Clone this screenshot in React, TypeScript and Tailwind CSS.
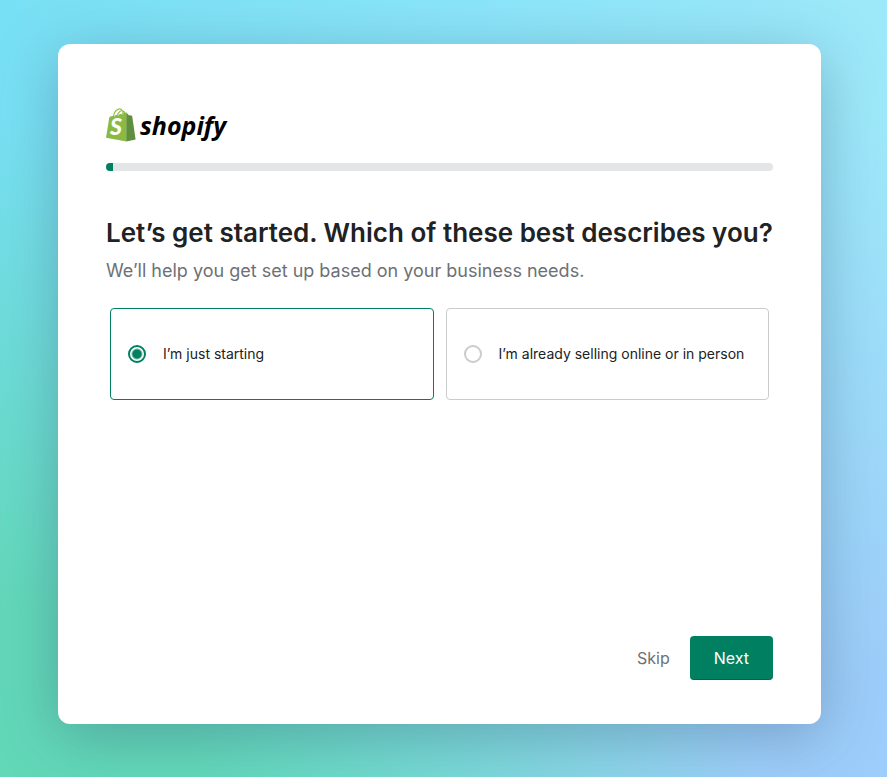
import { useState } from "react";

const OPTIONS = [
  { value: "starting", label: "I’m just starting" },
  { value: "selling", label: "I’m already selling online or in person" },
];

const ShopifyLogo = () => (
  <div className="flex h-[34px] items-center gap-1">
    <svg width="30" height="34" viewBox="0 0 30 34" aria-hidden="true">
      {/* handle */}
      <path
        d="M7.5 8.5C8 4.500 10.500 1 13.500 1c2.500 0 3.500 2.500 3.500 6M11.500 7.500C12 4.500 14.500 2.500 16.500 2.800c1.800.3 2.700 2 3 4"
        fill="none"
        stroke="#95bf47"
        strokeWidth="1.3"
      />
      {/* bag */}
      <path
        d="M3.300 9.600c.1-.7.4-1 1-1.200L20.500 4.500V33.500L0 29.800z"
        fill="#8aba41"
      />
      <path
        d="M20.300 4.600l2.500 2.600 2.700.3c.4 0 .6.300.7.700L29.600 31.400 20.300 33.500z"
        fill="#5e8e3e"
      />
      <path
        d="M8.500 8.600C9 5 11 2 13.400 2c1.800 0 2.600 1.800 2.700 4.600M12.300 7.600c.6-2.400 2.300-3.900 4-3.800"
        fill="none"
        stroke="#fff"
        strokeWidth="0.6"
      />
      <text
        x="4"
        y="27"
        fontFamily="Lato, sans-serif"
        fontSize="23"
        fontWeight="900"
        fontStyle="italic"
        fill="#fff"
      >
        S
      </text>
    </svg>
    <span className="font-['Open_Sans',sans-serif] text-[25px] leading-8 font-bold text-black italic">
      shopify
    </span>
  </div>
);

const ProgressBar: React.FC<{ percent: number }> = ({ percent }) => (
  <div
    role="progressbar"
    aria-label="Setup progress"
    aria-valuenow={percent}
    aria-valuemin={0}
    aria-valuemax={100}
    className="mt-[21px] h-2 overflow-hidden rounded-full bg-[#e4e5e7]"
  >
    <div className="h-full bg-[#008060]" style={{ width: `${percent}%` }} />
  </div>
);

const App = () => {
  const [selected, setSelected] = useState("starting");

  return (
    <main className="flex min-h-screen bg-[radial-gradient(ellipse_85%_85%_at_0%_100%,#62d8b8_0%,#62d8b8_25%,#62d8b800_100%),radial-gradient(ellipse_80%_85%_at_100%_100%,#9dcdfa_0%,#9dcdfa_15%,#9dcdfa00_100%),linear-gradient(to_right,#78e0f4,#8ae5f9_50%,#9ee9f9)] pt-11 pr-[66px] pb-[53px] pl-[58px] font-['Inter',sans-serif]">
      <form
        onSubmit={(e) => e.preventDefault()}
        className="flex grow flex-col rounded-xl bg-white px-12 pt-16 pb-11 shadow-[0_12px_60px_rgba(50,80,110,0.36)]"
      >
        <ShopifyLogo />
        <ProgressBar percent={1} />
        <h1 className="mt-[46px] text-[26px] leading-8 font-semibold text-[#202223] md:whitespace-nowrap">
          Let’s get started. Which of these best describes you?
        </h1>
        <p className="mt-2 text-lg leading-7 text-[#6d7175]">
          We’ll help you get set up based on your business needs.
        </p>
        <div className="mt-[23px] grid grid-cols-2 gap-3 px-1">
          {OPTIONS.map(({ value, label }) => (
            <label
              key={value}
              className="flex h-[92px] items-center gap-[17px] rounded border border-[#c9cccf] px-[17px] text-sm text-[#202223] has-checked:border-[#008060]"
            >
              <input
                type="radio"
                name="business"
                value={value}
                checked={selected === value}
                onChange={() => setSelected(value)}
                className="size-[18px] shrink-0 appearance-none rounded-full border-2 border-[#c9cccf] checked:border-[#008060] checked:bg-[radial-gradient(circle,#008060_4px,transparent_6px)]"
              />
              {label}
            </label>
          ))}
        </div>
        <div className="mt-auto flex items-center justify-end gap-5">
          <button type="button" className="text-base text-[#6d7175]">
            Skip
          </button>
          <button
            type="submit"
            className="h-11 rounded bg-[#008060] px-6 text-base text-white shadow-[inset_0_-1px_0_rgba(0,0,0,0.2)]"
          >
            Next
          </button>
        </div>
      </form>
    </main>
  );
};

export default App;
